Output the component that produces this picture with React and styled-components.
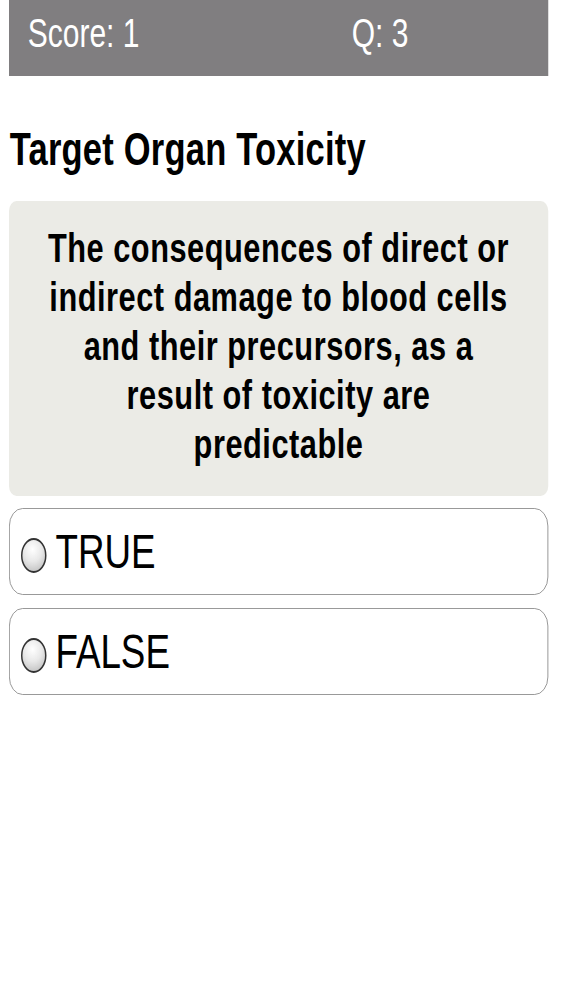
import React from "react";
import styled, { createGlobalStyle } from "styled-components";

const Global = createGlobalStyle`
  html, body { margin: 0; padding: 0; background: #ffffff; }
  body { font-family: "Liberation Sans", Arial, Helvetica, sans-serif; overflow-x: hidden; }
`;

const SCALE = 0.75;

const Stage = styled.div`
  width: ${563 / SCALE}px;
  transform: scaleX(${SCALE});
  transform-origin: 0 0;
  padding: 0 ${15 / SCALE}px 0 ${9 / SCALE}px;
  box-sizing: border-box;
`;

const Header = styled.header`
  height: 76px;
  background: #807e80;
  display: flex;
  align-items: center;
  padding-left: 25px;
  color: #ffffff;
  font-size: 40px;
  padding-bottom: 11px;
  box-sizing: border-box;
`;

const HeaderItem = styled.span`
  width: ${(p) => p.$w || "auto"};
  line-height: 1;
`;

const Title = styled.h1`
  margin: 46px 0 0 1px;
  font-size: 46px;
  font-weight: bold;
  color: #000;
  line-height: normal;
  letter-spacing: 0.3px;
`;

const QuestionCard = styled.div`
  margin-top: 25px;
  background: #ebebe6;
  border-radius: 10px;
  padding: 23px 46px 27px;
  text-align: center;
  font-size: 41px;
  font-weight: bold;
  line-height: 49px;
  letter-spacing: 0.7px;
  color: #000;
`;

const Options = styled.div`
  display: flex;
  flex-direction: column;
  gap: 13px;
  margin-top: 12px;
`;

const Option = styled.label`
  display: flex;
  align-items: center;
  gap: 12px;
  height: 87px;
  box-sizing: border-box;
  border: 1.5px solid #8a8a8a;
  border-radius: 18px;
  padding-left: 15px;
  font-size: 49px;
  color: #000;
  background: #fff;
`;

const Radio = styled.span`
  width: 34px;
  height: 35px;
  margin-top: 7px;
  border-radius: 50%;
  box-sizing: border-box;
  border: 2px solid #333;
  background: radial-gradient(circle at 45% 30%, #ffffff 0%, #e8e8e8 45%, #b5b5b5 100%);
  flex-shrink: 0;
`;

const OptionText = styled.span`
  line-height: 1;
`;

export default function App() {
  return (
    <>
      <Global />
      <Stage>
        <Header>
          <HeaderItem $w="432px">Score: 1</HeaderItem>
          <HeaderItem>Q: 3</HeaderItem>
        </Header>
        <Title>Target Organ Toxicity</Title>
        <QuestionCard>
          The consequences of direct or indirect damage to blood cells and their precursors, as a result of toxicity are predictable
        </QuestionCard>
        <Options>
          <Option>
            <Radio />
            <OptionText>TRUE</OptionText>
          </Option>
          <Option>
            <Radio />
            <OptionText>FALSE</OptionText>
          </Option>
        </Options>
      </Stage>
    </>
  );
}
